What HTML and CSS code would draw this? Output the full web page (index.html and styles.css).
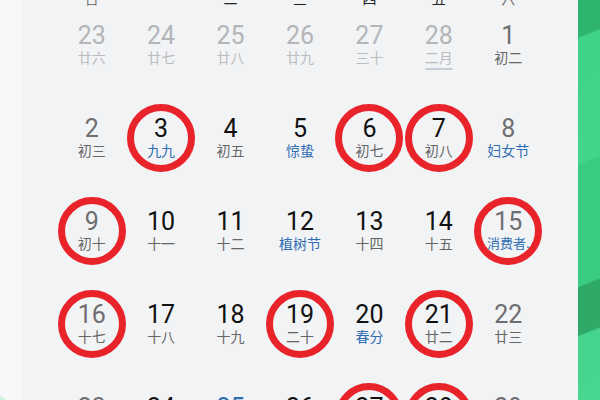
FILE: index.html
```html
<!DOCTYPE html>
<html lang="zh-CN">
<head>
<meta charset="utf-8">
<title>日历</title>
<link rel="stylesheet" href="styles.css">
</head>
<body>
<div class="photo">
  <div class="edge-left"></div>
  <div class="panel">
    <div class="week">
      <span class="wk weekend">日</span><span class="wk">一</span><span class="wk">二</span><span class="wk">三</span><span class="wk">四</span><span class="wk">五</span><span class="wk weekend">六</span>
    </div>
    <div class="grid">
      <div class="cell prev"><div class="day"><span class="num">23</span><span class="lun">廿六</span></div></div>
      <div class="cell prev"><div class="day"><span class="num">24</span><span class="lun">廿七</span></div></div>
      <div class="cell prev"><div class="day"><span class="num">25</span><span class="lun">廿八</span></div></div>
      <div class="cell prev"><div class="day"><span class="num">26</span><span class="lun">廿九</span></div></div>
      <div class="cell prev"><div class="day"><span class="num">27</span><span class="lun">三十</span></div></div>
      <div class="cell prev"><div class="day"><span class="num">28</span><span class="lun">二月</span><span class="mark"></span></div></div>
      <div class="cell weekend"><div class="day"><span class="num">1</span><span class="lun">初二</span></div></div>

      <div class="cell weekend"><div class="day"><span class="num">2</span><span class="lun">初三</span></div></div>
      <div class="cell"><div class="day ring"><span class="num">3</span><span class="lun fest">九九</span></div></div>
      <div class="cell"><div class="day"><span class="num">4</span><span class="lun">初五</span></div></div>
      <div class="cell"><div class="day"><span class="num">5</span><span class="lun fest">惊蛰</span></div></div>
      <div class="cell"><div class="day ring"><span class="num">6</span><span class="lun">初七</span></div></div>
      <div class="cell"><div class="day ring"><span class="num">7</span><span class="lun">初八</span></div></div>
      <div class="cell weekend"><div class="day"><span class="num">8</span><span class="lun fest">妇女节</span></div></div>

      <div class="cell weekend"><div class="day ring"><span class="num">9</span><span class="lun">初十</span></div></div>
      <div class="cell"><div class="day"><span class="num">10</span><span class="lun">十一</span></div></div>
      <div class="cell"><div class="day"><span class="num">11</span><span class="lun">十二</span></div></div>
      <div class="cell"><div class="day"><span class="num">12</span><span class="lun fest">植树节</span></div></div>
      <div class="cell"><div class="day"><span class="num">13</span><span class="lun">十四</span></div></div>
      <div class="cell"><div class="day"><span class="num">14</span><span class="lun">十五</span></div></div>
      <div class="cell weekend"><div class="day ring"><span class="num">15</span><span class="lun fest wide">消费者.</span></div></div>

      <div class="cell weekend"><div class="day ring"><span class="num">16</span><span class="lun">十七</span></div></div>
      <div class="cell"><div class="day"><span class="num">17</span><span class="lun">十八</span></div></div>
      <div class="cell"><div class="day"><span class="num">18</span><span class="lun">十九</span></div></div>
      <div class="cell"><div class="day ring"><span class="num">19</span><span class="lun">二十</span></div></div>
      <div class="cell"><div class="day"><span class="num">20</span><span class="lun fest">春分</span></div></div>
      <div class="cell"><div class="day ring"><span class="num">21</span><span class="lun">廿二</span></div></div>
      <div class="cell weekend"><div class="day"><span class="num">22</span><span class="lun">廿三</span></div></div>

      <div class="cell weekend"><div class="day"><span class="num">23</span><span class="lun">廿四</span></div></div>
      <div class="cell"><div class="day"><span class="num">24</span><span class="lun">廿五</span></div></div>
      <div class="cell"><div class="day"><span class="num blue">25</span><span class="lun">廿六</span></div></div>
      <div class="cell"><div class="day"><span class="num">26</span><span class="lun">廿七</span></div></div>
      <div class="cell"><div class="day ring"><span class="num">27</span><span class="lun">廿八</span></div></div>
      <div class="cell"><div class="day ring"><span class="num">28</span><span class="lun">廿九</span></div></div>
      <div class="cell weekend"><div class="day"><span class="num">29</span><span class="lun">三月</span></div></div>
    </div>
  </div>
  <div class="edge-right"></div>
</div>
</body>
</html>
```

FILE: styles.css
```css
html, body {
  margin: 0;
  padding: 0;
  width: 600px;
  height: 400px;
  overflow: hidden;
  background: #f2f3f5;
}

.photo {
  display: flex;
  width: 600px;
  height: 400px;
  overflow: hidden;
}

.edge-left {
  width: 22px;
  flex: none;
  background:
    linear-gradient(35deg, #bdeed4 0, #d6f5e5 12%, rgba(247,249,250,0) 12.5%),
    #f7f8fa;
  background-size: 22px 40px, auto;
  background-position: 0 362px, 0 0;
  background-repeat: no-repeat;
}

.edge-right {
  width: 22px;
  flex: none;
  background:
    linear-gradient(158deg,
      #2fb46d 0, #2fb46d 9%,
      #3fd388 9.5%, #42d58b 40%,
      #3acd82 40.5%, #3acd82 70%,
      #2ea968 70.5%, #2ea968 82%,
      #45d48d 82.5%, #48d690 100%);
}

.panel {
  flex: 1;
  background: #f2f3f5;
  padding: 0 35px;
}

.week {
  display: grid;
  grid-template-columns: repeat(7, 1fr);
  height: 22px;
  margin-top: -13px;
  font-family: "Noto Sans CJK SC", sans-serif;
  font-size: 14px;
  line-height: 22px;
  text-align: center;
  color: #222;
}

.wk.weekend {
  color: #777;
}

.grid {
  display: grid;
  grid-template-columns: repeat(7, 1fr);
  grid-auto-rows: 93px;
}

.cell {
  display: flex;
  flex-direction: column;
  align-items: center;
}

.day {
  box-sizing: border-box;
  width: 68px;
  height: 68px;
  margin-top: 2px;
  padding-top: 5px;
  border: 7px solid transparent;
  border-radius: 50%;
  display: flex;
  flex-direction: column;
  align-items: center;
}

.day.ring {
  border-color: #e8232a;
}

.num {
  font-family: Roboto, "Noto Sans", sans-serif;
  font-size: 25px;
  font-weight: 400;
  line-height: 26px;
  color: #111;
}

.lun {
  font-family: "Noto Sans CJK SC", sans-serif;
  font-size: 14px;
  line-height: 16px;
  color: #666;
  white-space: nowrap;
}

.lun.fest {
  color: #2f6db3;
}

.lun.wide {
  font-size: 13px;
}

.num.blue {
  color: #2f6db3;
}

.cell.weekend .num {
  color: #6e6e70;
}

.cell.prev .num {
  color: #b4b5b8;
}

.cell.prev .lun {
  color: #bbbcbf;
}

.mark {
  width: 28px;
  height: 2px;
  margin-top: 3px;
  background: #c6ccd8;
  border-radius: 1px;
}
```
